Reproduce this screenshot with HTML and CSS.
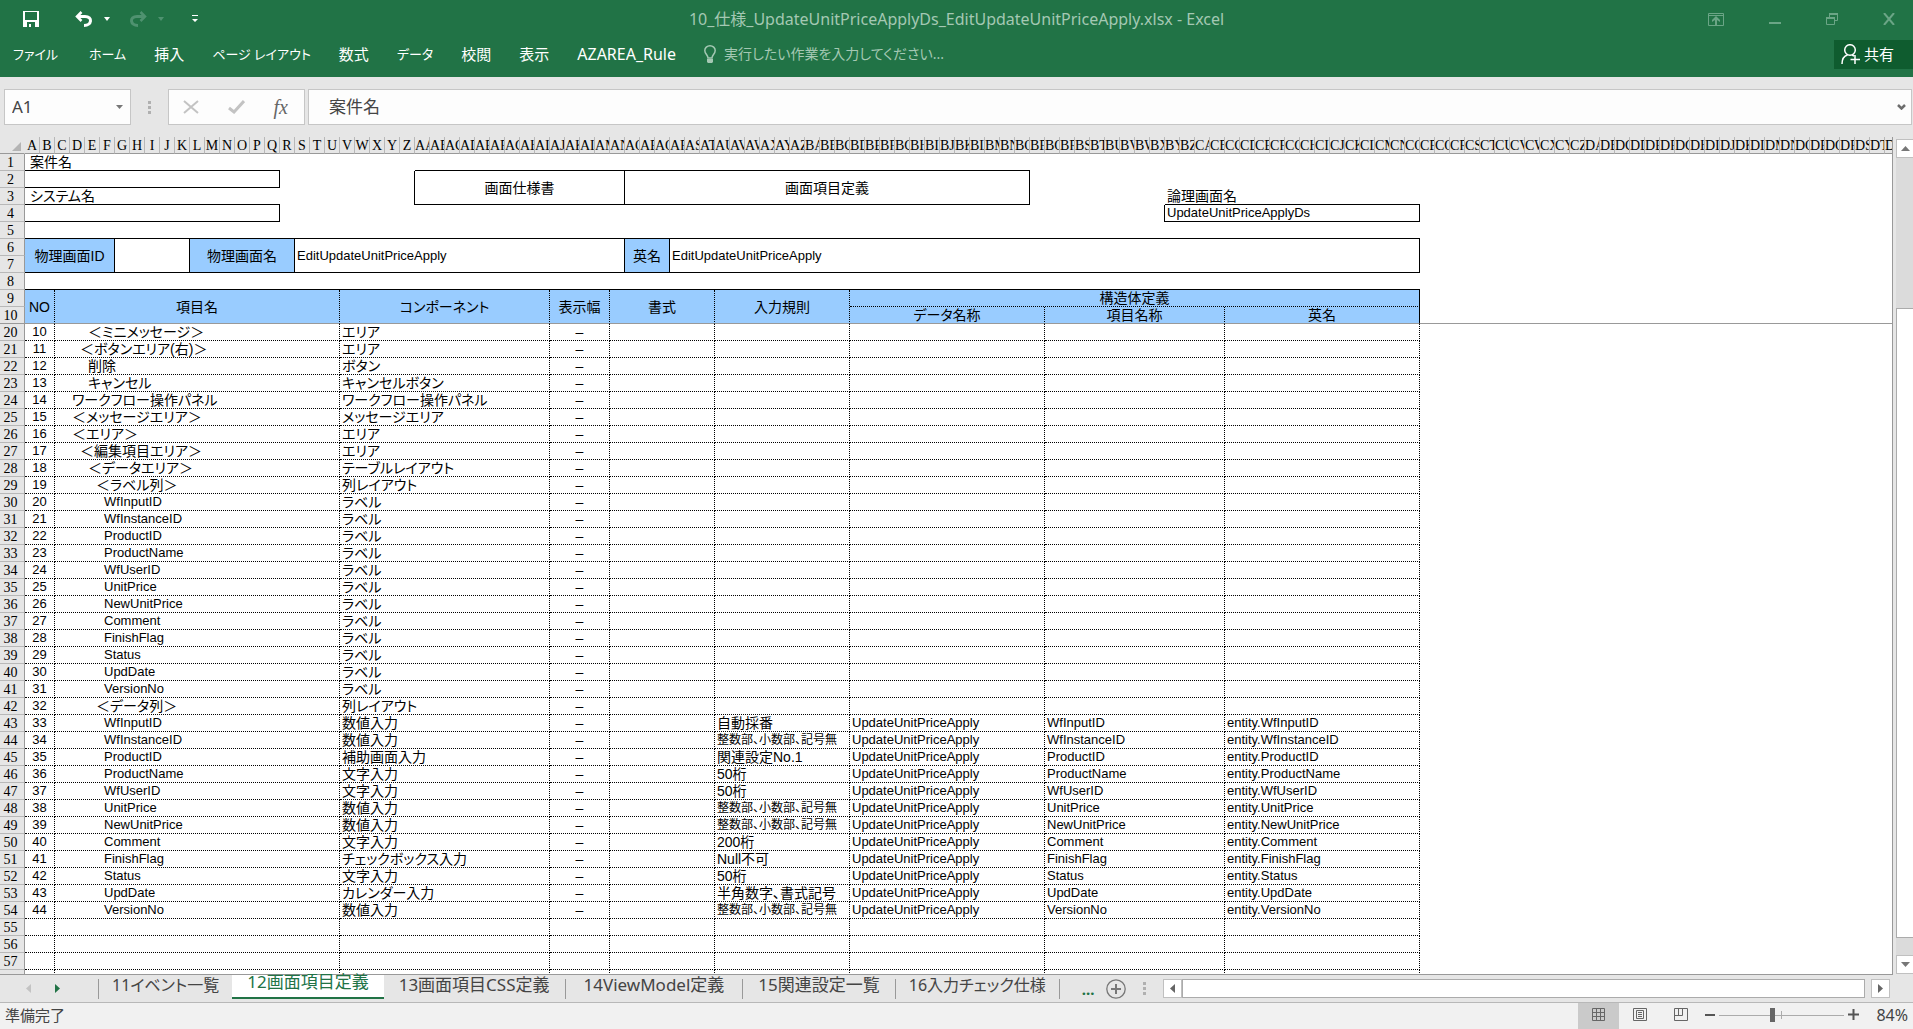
FILE: index.html
```html
<!DOCTYPE html>
<html lang="ja">
<head>
<meta charset="utf-8">
<title>10_仕様_UpdateUnitPriceApplyDs_EditUpdateUnitPriceApply.xlsx - Excel</title>
<link rel="stylesheet" href="styles.css">
</head>
<body>
<header class="ribbon">
  <div class="title-bar">
    <div class="quick-access">
      <button class="icon-btn save" aria-label="上書き保存"><svg width="16" height="16" viewBox="0 0 16 16"><path fill="#fff" fill-rule="evenodd" d="M0 0h16v16H0zM2 1v8h12V1zM4 11v5h2v-3h2v3h4v-5z"/></svg></button>
      <button class="icon-btn undo" aria-label="元に戻す"><svg width="18" height="16" viewBox="0 0 18 16"><path fill="none" stroke="#fff" stroke-width="3" d="M3 5.500h7c8 0 7 9-1 9"/><path fill="none" stroke="#fff" stroke-width="2.500" d="M6.500 1L2 5.500l4.500 4.500"/></svg></button>
      <button class="icon-btn caret" aria-label="元に戻す履歴"><svg width="6" height="4" viewBox="0 0 6 4"><path fill="#fff" d="M0 0h6L3 4z"/></svg></button>
      <button class="icon-btn redo" aria-label="やり直し"><svg width="18" height="16" viewBox="0 0 18 16"><path fill="none" stroke="#4f9270" stroke-width="3" d="M15 5.500H8C0 5.500 1 14.500 9 14.500"/><path fill="none" stroke="#4f9270" stroke-width="2.500" d="M11.500 1L16 5.500 11.500 10"/></svg></button>
      <button class="icon-btn caret" aria-label="やり直し履歴"><svg width="6" height="4" viewBox="0 0 6 4"><path fill="#4f9270" d="M0 0h6L3 4z"/></svg></button>
      <button class="icon-btn customize" aria-label="クイック アクセスのカスタマイズ"><svg width="6" height="8" viewBox="0 0 6 8"><path fill="#fff" d="M0 0h6v1H0zM0 4h6L3 7z"/></svg></button>
    </div>
    <h1 class="doc-title">10_仕様_UpdateUnitPriceApplyDs_EditUpdateUnitPriceApply.xlsx - Excel</h1>
    <div class="window-controls">
      <button class="icon-btn" aria-label="リボンの表示オプション"><svg width="16" height="13" viewBox="0 0 16 13"><path fill="none" stroke="#6ba586" d="M.5.500h15v12H.500zM0 2.500h16"/><path fill="#6ba586" d="M8 3l4 4v2L9 7v5H7V7L4 9V7z"/></svg></button>
      <button class="icon-btn" aria-label="最小化"><svg width="12" height="13" viewBox="0 0 12 13"><path fill="#6ba586" d="M0 9h12v2H0z"/></svg></button>
      <button class="icon-btn" aria-label="元のサイズに戻す"><svg width="12" height="13" viewBox="0 0 12 13"><path fill="none" stroke="#6ba586" d="M.5 4.500h8v7h-8zM3.500 4V.500h8v7H9"/><path fill="#6ba586" d="M0 4h9v2H0zM3 0h9v2H3z"/></svg></button>
      <button class="icon-btn" aria-label="閉じる"><svg width="12" height="12" viewBox="0 0 12 12"><path stroke="#6ba586" stroke-width="2" d="M1 0l10 12M11 0L1 12"/></svg></button>
    </div>
  </div>
  <nav class="menu">
    <button class="menu-tab kana file">ファイル</button>
    <button class="menu-tab kana">ホーム</button>
    <button class="menu-tab">挿入</button>
    <button class="menu-tab kana">ページ レイアウト</button>
    <button class="menu-tab">数式</button>
    <button class="menu-tab kana">データ</button>
    <button class="menu-tab">校閲</button>
    <button class="menu-tab">表示</button>
    <button class="menu-tab roman">AZAREA_Rule</button>
    <label class="tell-me">
      <svg width="12" height="18" viewBox="0 0 12 18"><path fill="none" stroke="#a4c8b3" stroke-width="1.500" d="M4 13c0-3-3.200-4-3.200-7.500a5.200 4.700 0 0 1 10.400 0C11.200 9 8 10 8 13z"/><path fill="#a4c8b3" d="M3 14h6v3l-1 1H4l-1-1z"/></svg>
      <input type="text" placeholder="実行したい作業を入力してください..." aria-label="操作アシスト">
    </label>
    <button class="share">
      <svg width="19" height="20" viewBox="0 0 19 20"><g fill="none" stroke="#fff" stroke-width="1.500"><ellipse cx="9" cy="6" rx="5.300" ry="5.300"/><path d="M1 20c0-5 2-8 5.500-9M11 11l2 1M14 11v9M9.500 15.500H19"/></g></svg>
      共有</button>
  </nav>
</header>

<section class="formula-bar">
  <div class="name-box"><input type="text" value="A1" aria-label="名前ボックス"><svg width="7" height="4" viewBox="0 0 7 4"><path fill="#777" d="M0 0h7L3.500 4z"/></svg></div>
  <div class="grip"></div>
  <div class="formula-actions">
    <button class="icon-btn" aria-label="キャンセル"><svg width="16" height="14" viewBox="0 0 16 14"><path stroke="#c3c3c3" stroke-width="2" d="M1 1l14 12M15 1L1 13"/></svg></button>
    <button class="icon-btn" aria-label="入力"><svg width="17" height="14" viewBox="0 0 17 14"><path fill="none" stroke="#c3c3c3" stroke-width="3" d="M1 8l5 4L16 1"/></svg></button>
    <button class="icon-btn fx" aria-label="関数の挿入"><i>fx</i></button>
  </div>
  <div class="formula-input"><input type="text" value="案件名" aria-label="数式バー"><svg width="9" height="6" viewBox="0 0 9 6"><path fill="none" stroke="#6d6d6d" stroke-width="2.500" d="M1 1l3.500 3.500L8 1"/></svg></div>
</section>

<main class="workspace">
  <div class="sheet">
    <table class="grid">
      <colgroup><col class="row-no-col"><col class="unit-col" span="125"></colgroup>
      <thead>
        <tr id="letters"><th class="corner"><svg width="9" height="9" viewBox="0 0 9 9"><path fill="#b4b4b4" d="M9 0v9H0z"/></svg></th></tr>
      </thead>
      <tbody class="frozen">
        <tr><th class="row-no">1</th><td colspan="17" class="line-b inset">案件名</td><td colspan="9"></td><td colspan="41" class="line-b"></td><td colspan="58"></td></tr>
        <tr><th class="row-no">2</th><td colspan="17" class="line-b line-r"></td><td colspan="9" class="line-r"></td><td colspan="14" rowspan="2" class="line-b line-r center">画面仕様書</td><td colspan="27" rowspan="2" class="line-b line-r center">画面項目定義</td><td colspan="58"></td></tr>
        <tr><th class="row-no">3</th><td colspan="17" class="line-b inset">システム名</td><td colspan="9" class="line-r"></td><td colspan="9"></td><td colspan="17" class="line-b">論理画面名</td><td colspan="32"></td></tr>
        <tr><th class="row-no">4</th><td colspan="17" class="line-b line-r"></td><td colspan="58"></td><td class="line-r"></td><td colspan="17" class="line-b line-r latin">UpdateUnitPriceApplyDs</td><td colspan="32"></td></tr>
        <tr><th class="row-no">5</th><td colspan="93" class="line-b"></td><td colspan="32"></td></tr>
        <tr><th class="row-no">6</th><td colspan="6" rowspan="2" class="line-b line-r center blue">物理画面ID</td><td colspan="5" rowspan="2" class="line-b line-r"></td><td colspan="7" rowspan="2" class="line-b line-r center blue">物理画面名</td><td colspan="22" rowspan="2" class="line-b line-r latin">EditUpdateUnitPriceApply</td><td colspan="3" rowspan="2" class="line-b line-r center blue">英名</td><td colspan="50" rowspan="2" class="line-b line-r latin">EditUpdateUnitPriceApply</td><td colspan="32"></td></tr>
        <tr><th class="row-no">7</th><td colspan="32"></td></tr>
        <tr><th class="row-no">8</th><td colspan="93" class="line-b"></td><td colspan="32"></td></tr>
        <tr><th class="row-no">9</th><th colspan="2" rowspan="2" class="head freeze">NO</th><th colspan="19" rowspan="2" class="head freeze">項目名</th><th colspan="14" rowspan="2" class="head freeze">コンポーネント</th><th colspan="4" rowspan="2" class="head freeze">表示幅</th><th colspan="7" rowspan="2" class="head freeze">書式</th><th colspan="9" rowspan="2" class="head freeze">入力規則</th><th colspan="38" class="head line-r">構造体定義</th><td colspan="32"></td></tr>
        <tr><th class="row-no freeze">10</th><th colspan="13" class="head freeze">データ名称</th><th colspan="12" class="head freeze">項目名称</th><th colspan="13" class="head freeze line-r">英名</th><td colspan="32" class="freeze"></td></tr>
      </tbody>
      <tbody id="items"></tbody>
    </table>
  </div>
  <div class="v-scroll">
    <button class="scroll-btn" aria-label="上へ"><svg width="9" height="5" viewBox="0 0 9 5"><path fill="#777" d="M0 5h9L4.500 0z"/></svg></button>
    <div class="track-before"></div>
    <div class="thumb"></div>
    <div class="track-after"></div>
    <button class="scroll-btn" aria-label="下へ"><svg width="9" height="5" viewBox="0 0 9 5"><path fill="#777" d="M0 0h9L4.500 5z"/></svg></button>
  </div>
</main>

<nav class="sheet-bar">
  <div class="sheet-nav">
    <button class="icon-btn" aria-label="前のシート"><svg width="5" height="9" viewBox="0 0 5 9"><path fill="#c3c3c3" d="M5 0v9L0 4.500z"/></svg></button>
    <button class="icon-btn" aria-label="次のシート"><svg width="5" height="9" viewBox="0 0 5 9"><path fill="#217346" d="M0 0v9l5-4.500z"/></svg></button>
  </div>
  <button class="sheet-tab kana-tab before-active">11イベント一覧</button>
  <button class="sheet-tab active">12画面項目定義</button>
  <button class="sheet-tab">13画面項目CSS定義</button>
  <button class="sheet-tab roomy">14ViewModel定義</button>
  <button class="sheet-tab">15関連設定一覧</button>
  <button class="sheet-tab kana-tab">16入力チェック仕様</button>
  <button class="more">...</button>
  <button class="icon-btn" aria-label="新しいシート"><svg width="20" height="20" viewBox="0 0 20 20"><circle cx="10" cy="10" r="9.200" fill="none" stroke="#777" stroke-width="1.300"/><path stroke="#777" stroke-width="2" d="M5 10h10M10 5v10"/></svg></button>
  <div class="grip"></div>
  <div class="h-scroll">
    <button class="scroll-btn" aria-label="左へ"><svg width="5" height="9" viewBox="0 0 5 9"><path fill="#666" d="M5 0v9L0 4.500z"/></svg></button>
    <div class="thumb"></div>
    <button class="scroll-btn last" aria-label="右へ"><svg width="5" height="9" viewBox="0 0 5 9"><path fill="#666" d="M0 0v9l5-4.500z"/></svg></button>
  </div>
</nav>

<footer class="status-bar">
  <span class="status-text">準備完了</span>
  <button class="view-btn selected" aria-label="標準"><svg width="13" height="13" viewBox="0 0 13 13"><path fill="none" stroke="#666" d="M.5.500h12v12H.500zM4.500 0v13M8.500 0v13M0 4.500h13M0 8.500h13"/></svg></button>
  <button class="view-btn" aria-label="ページ レイアウト"><svg width="14" height="13" viewBox="0 0 14 13"><path fill="none" stroke="#666" d="M.5.500h13v12H.500zM3.500 2.500h7v8h-7zM5 4.500h4M5 6.500h4M5 8.500h4"/></svg></button>
  <button class="view-btn" aria-label="改ページ プレビュー"><svg width="14" height="13" viewBox="0 0 14 13"><path fill="none" stroke="#666" d="M.5.500h13v12H.500zM.5 7.500h8V.500M4.500.500v7"/></svg></button>
  <button class="zoom-btn" aria-label="縮小"><svg width="10" height="10" viewBox="0 0 10 10"><path fill="#555" d="M0 4h10v2H0z"/></svg></button>
  <input class="zoom-slider" type="range" min="0" max="100" value="42" aria-label="ズーム">
  <button class="zoom-btn" aria-label="拡大"><svg width="11" height="11" viewBox="0 0 11 11"><path stroke="#555" stroke-width="2" d="M0 5.500h11M5.500 0v11"/></svg></button>
  <span class="zoom-value">84%</span>
</footer>
<script src="script.js"></script>
</body>
</html>
```
FILE: styles.css
```css
* { box-sizing: border-box; }

body {
  margin: 0;
  height: 100vh;
  display: flex;
  flex-direction: column;
  overflow: hidden;
  background: #e6e6e6;
  color: #444;
  font: 15px/20px "Noto Sans", "Noto Sans CJK JP", sans-serif;
  font-feature-settings: "palt";
}

button, input {
  margin: 0;
  padding: 0;
  border: 0;
  border-radius: 0;
  background: none;
  color: inherit;
  font: inherit;
  font-feature-settings: inherit;
  white-space: nowrap;
}

input { min-width: 0; outline: 0; }
svg { display: block; flex: none; }

.icon-btn {
  display: flex;
  align-items: center;
  justify-content: center;
}

/* Ribbon */
.ribbon {
  flex: none;
  height: 77px;
  background: #217346;
  color: #fff;
}

.title-bar {
  display: grid;
  grid-template-columns: 1fr auto 1fr;
  align-items: center;
  height: 38px;
}

.quick-access { display: flex; align-items: center; padding-left: 23px; }
.undo { margin-left: 36px; }
.caret { margin-left: 11px; }
.redo { margin-left: 19px; }
.customize { margin-left: 28px; }

.doc-title {
  margin: 0;
  font-size: 16px;
  font-weight: 400;
  color: #a4c8b3;
}

.window-controls {
  display: flex;
  align-items: center;
  justify-content: flex-end;
  gap: 45px;
  padding-right: 18px;
}

.menu { display: flex; align-items: center; height: 32px; }
.menu-tab { margin-right: 28px; line-height: 30px; }
.kana { font-size: 13px; }
.roman { font-size: 16px; }
.file { margin: 0 31px 0 13px; }
.tell-me { display: flex; flex: 1; align-items: center; gap: 8px; color: #a4c8b3; font-size: 14px; }
.tell-me input { flex: 1; }
.tell-me input::placeholder { color: #a4c8b3; opacity: 1; }

.share {
  display: flex;
  align-items: center;
  gap: 4px;
  height: 29px;
  padding: 0 19px 0 7px;
  background: #0f5c2f;
}

/* Formula bar */
.formula-bar {
  flex: none;
  display: flex;
  align-items: center;
  height: 60px;
  padding: 0 1px 0 4px;
  font-size: 17px;
}

.name-box, .formula-actions, .formula-input {
  display: flex;
  align-items: center;
  height: 36px;
  border: 1px solid #c6c6c6;
  background: #fdfdfd;
}

.name-box { width: 127px; padding: 0 7px; }
.name-box input { flex: 1; }

.grip {
  width: 3px;
  height: 13px;
  margin: 0 17px;
  background: repeating-linear-gradient(#b0b0b0 0 3px, transparent 3px 5px);
}

.formula-actions { width: 137px; justify-content: space-between; padding: 0 16px 0 14px; }
.fx { font: 20px/24px "Liberation Serif", serif; color: #666; }
.formula-input { flex: 1; margin-left: 3px; padding: 0 5px 0 20px; }
.formula-input input { flex: 1; }

/* Worksheet */
.workspace { flex: 1; min-height: 0; display: flex; }

.sheet {
  flex: 1;
  min-width: 0;
  overflow: hidden;
  border-right: 1px solid #999;
  border-bottom: 1px solid #999;
  background: #fff;
}

.grid {
  width: 1px;
  table-layout: fixed;
  border-collapse: separate;
  border-spacing: 0;
  color: #000;
  font: 14px/16px "Liberation Sans", "Noto Sans CJK JP", sans-serif;
  font-feature-settings: "palt";
}

.row-no-col { width: 25px; }
.unit-col { width: 15px; }
.grid tr { height: 17px; }

.grid th, .grid td {
  height: 17px;
  padding: 0 2px;
  overflow: hidden;
  font-weight: 400;
  text-align: left;
  vertical-align: middle;
  white-space: nowrap;
}

.grid .corner, .grid .letter, .grid .row-no {
  padding: 2px 0 0;
  background: #e6e6e6;
  border-right: 1px solid #b8b8b8;
  border-bottom: 1px solid #999;
  font-family: "Liberation Serif", serif;
  line-height: 14px;
  text-align: center;
}

.grid .corner { border-right-color: #e6e6e6; }
.corner svg { margin-left: 12px; }
.grid .row-no { border-right-color: #999; border-bottom-color: #b8b8b8; padding-right: 3px; }
.grid .inset { padding-left: 5px; }
.grid .center, .grid .head { text-align: center; }
.grid .blue, .grid .head { background: #99ccff; }
.grid .latin, .grid .no { font-size: 13px; }
.grid .small { font-size: 12px; }

.grid .head { border-right: 1px dotted #000; border-bottom: 1px dotted #000; }
.grid .line-r { border-right: 1px solid #000; }
.grid .line-b { border-bottom: 1px solid #000; }
.grid .freeze { border-bottom: 1px solid #999; }
.grid .item { border-right: 1px dotted #000; border-bottom: 1px dotted #000; }
.grid .no, .grid .width { text-align: center; }

.grid .level-2 { padding-left: 17px; }
.grid .level-3 { padding-left: 25px; }
.grid .level-4 { padding-left: 33px; }
.grid .level-5 { padding-left: 41px; }
.grid .level-6 { padding-left: 49px; }

/* Scroll bars */
.v-scroll {
  flex: none;
  display: flex;
  flex-direction: column;
  width: 20px;
  padding: 2px 0 1px 3px;
}

.scroll-btn {
  display: flex;
  flex: none;
  align-items: center;
  justify-content: center;
  width: 19px;
  height: 19px;
  border: 1px solid #c0c0c0;
  background: #fff;
}

.thumb { border: 1px solid #ababab; background: #fff; }
.track-before { flex: 150; background: #dbdbdb; }
.v-scroll .thumb { flex: 630; border-right: 0; }
.track-after { flex: 17; background: #dbdbdb; }

/* Sheet tabs */
.sheet-bar {
  flex: none;
  display: flex;
  align-items: center;
  height: 27px;
  padding-right: 23px;
}

.sheet-nav {
  display: flex;
  gap: 24px;
  width: 99px;
  height: 20px;
  padding-left: 26px;
  border-right: 1px solid #999;
}

.sheet-tab {
  height: 20px;
  padding: 0 15px 8px;
  border-right: 1px solid #999;
  font-size: 17px;
  line-height: 12px;
}

.kana-tab { padding: 0 13px 8px; font-size: 16px; }
.roomy { padding: 0 18px 8px; }
.before-active { border-right: 0; }

.active {
  align-self: flex-start;
  height: 24px;
  border-right: 0;
  border-bottom: 2px solid #217346;
  background: #fff;
  color: #217346;
}

.more { margin: 0 12px 0 22px; color: #217346; font-weight: 700; }
.h-scroll { flex: 1; display: flex; }
.h-scroll .thumb { flex: 1; }
.last { margin-left: 6px; }

/* Status bar */
.status-bar {
  flex: none;
  display: flex;
  align-items: center;
  height: 27px;
  padding-right: 5px;
  border-top: 1px solid #b8b8b8;
  background: #f1f1f1;
}

.status-text { flex: 1; padding: 0 0 3px 5px; }

.view-btn {
  display: flex;
  align-items: center;
  justify-content: center;
  align-self: stretch;
  width: 41px;
  padding-bottom: 3px;
}

.selected { background: #cacaca; }
.zoom-btn { margin: 0 4px; padding-bottom: 3px; }

.zoom-slider {
  width: 125px;
  height: 16px;
  margin-bottom: 3px;
  appearance: none;
  background:
    linear-gradient(#ababab, #ababab) 62px 4px / 1px 8px no-repeat,
    linear-gradient(#ababab, #ababab) 0 8px / 100% 1px no-repeat;
}

.zoom-slider::-webkit-slider-thumb {
  appearance: none;
  width: 5px;
  height: 14px;
  background: #666;
}

.zoom-value { margin-left: 13px; padding-bottom: 3px; font-size: 16px; }
```
FILE: script.js
```js
// Column letters A, B, ... Z, AA, AB, ...
function columnName(index) {
  let name = "";
  for (let n = index; n > 0; n = Math.floor((n - 1) / 26)) {
    name = String.fromCharCode(65 + (n - 1) % 26) + name;
  }
  return name;
}

const letters = document.getElementById("letters");
for (let i = 1; i <= 125; i++) {
  const th = document.createElement("th");
  th.className = "letter";
  th.textContent = columnName(i);
  letters.append(th);
}

// [indent level, item name, component, input rule]
const DIGITS = "整数部、小数部、記号無";
const items = [
  [4, "＜ミニメッセージ＞", "エリア"],
  [3, "＜ボタンエリア(右)＞", "エリア"],
  [4, "削除", "ボタン"],
  [4, "キャンセル", "キャンセルボタン"],
  [2, "ワークフロー操作パネル", "ワークフロー操作パネル"],
  [2, "＜メッセージエリア＞", "メッセージエリア"],
  [2, "＜エリア＞", "エリア"],
  [3, "＜編集項目エリア＞", "エリア"],
  [4, "＜データエリア＞", "テーブルレイアウト"],
  [5, "＜ラベル列＞", "列レイアウト"],
  [6, "WfInputID", "ラベル"],
  [6, "WfInstanceID", "ラベル"],
  [6, "ProductID", "ラベル"],
  [6, "ProductName", "ラベル"],
  [6, "WfUserID", "ラベル"],
  [6, "UnitPrice", "ラベル"],
  [6, "NewUnitPrice", "ラベル"],
  [6, "Comment", "ラベル"],
  [6, "FinishFlag", "ラベル"],
  [6, "Status", "ラベル"],
  [6, "UpdDate", "ラベル"],
  [6, "VersionNo", "ラベル"],
  [5, "＜データ列＞", "列レイアウト"],
  [6, "WfInputID", "数値入力", "自動採番"],
  [6, "WfInstanceID", "数値入力", DIGITS],
  [6, "ProductID", "補助画面入力", "関連設定No.1"],
  [6, "ProductName", "文字入力", "50桁"],
  [6, "WfUserID", "文字入力", "50桁"],
  [6, "UnitPrice", "数値入力", DIGITS],
  [6, "NewUnitPrice", "数値入力", DIGITS],
  [6, "Comment", "文字入力", "200桁"],
  [6, "FinishFlag", "チェックボックス入力", "Null不可"],
  [6, "Status", "文字入力", "50桁"],
  [6, "UpdDate", "カレンダー入力", "半角数字、書式記号"],
  [6, "VersionNo", "数値入力", DIGITS]
];

function addCell(row, span, className, text) {
  const td = document.createElement("td");
  td.colSpan = span;
  td.className = className;
  td.textContent = text || "";
  row.append(td);
}

// Rows 20 to 57, then the sliver of the row below them
const body = document.getElementById("items");
for (let i = 0; i < 39; i++) {
  const [level, name, component, rule] = items[i] || [];
  const row = document.createElement("tr");
  const number = document.createElement("th");
  number.className = "row-no";
  number.textContent = i < 38 ? 20 + i : "";
  row.append(number);

  const latin = level === 6 ? " latin" : "";
  addCell(row, 2, "item no", name && String(10 + i));
  addCell(row, 19, "item level-" + (level || 0) + latin, name);
  addCell(row, 14, "item", component);
  addCell(row, 4, "item width", name && "–");
  addCell(row, 7, "item");
  addCell(row, 9, rule === DIGITS ? "item small" : "item", rule);
  addCell(row, 13, "item latin", rule && "UpdateUnitPriceApply");
  addCell(row, 12, "item latin", rule && name);
  addCell(row, 13, "item latin", rule && "entity." + name);
  addCell(row, 32, "");
  body.append(row);
}
```
